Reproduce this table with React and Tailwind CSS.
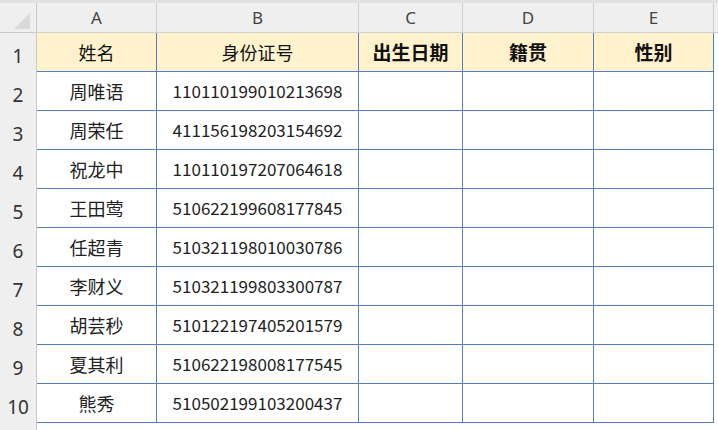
const cols = ['A', 'B', 'C', 'D', 'E'];
const widths = ['w-[120px]', 'w-[202px]', 'w-[104px]', 'w-[131px]', 'w-[120px]'];
const heads = ['姓名', '身份证号', '出生日期', '籍贯', '性别'];

const rows = [
  ['周唯语', '110110199010213698'],
  ['周荣任', '411156198203154692'],
  ['祝龙中', '110110197207064618'],
  ['王田莺', '510622199608177845'],
  ['任超青', '510321198010030786'],
  ['李财义', '510321199803300787'],
  ['胡芸秒', '510122197405201579'],
  ['夏其利', '510622198008177545'],
  ['熊秀', '510502199103200437'],
];

const font = { fontFamily: '"Noto Sans CJK SC", "Noto Sans", sans-serif' };

function RowHead({ n }) {
  return (
    <div className="flex h-[39px] w-[37px] shrink-0 items-end justify-center border-r border-[#c8c8c8] bg-[#efefef] pb-[2px] text-[19px] text-[#333]" style={{ fontFamily: '"Noto Sans", sans-serif' }}>
      {n}
    </div>
  );
}

export default function App() {
  return (
    <div className="h-[430px] w-[718px] overflow-hidden bg-white" style={font}>
      {/* column letters */}
      <div className="flex h-[33px] border-t-[3px] border-[#e2e2e2] bg-[#efefef]">
        <div className="flex w-[37px] shrink-0 items-center justify-center border-r border-b border-[#c8c8c8]">
          <div className="ml-[8px] mt-[6px] h-0 w-0 border-b-[16px] border-l-[16px] border-b-[#d9d9d9] border-l-transparent" />
        </div>
        {cols.map((c, i) => (
          <div
            key={c}
            className={`${widths[i]} flex shrink-0 items-center justify-center border-r border-b border-[#d0d0d0] text-[17px] text-[#444]`}
            style={{ fontFamily: '"Noto Sans", sans-serif' }}
          >
            {c}
          </div>
        ))}
        <div className="flex-1 border-b border-[#c8c8c8]" />
      </div>

      {/* row 1 headers */}
      <div className="flex">
        <RowHead n={1} />
        {heads.map((h, i) => (
          <div
            key={h}
            className={`${widths[i]} flex h-[39px] shrink-0 items-center justify-center border-r border-b border-[#5580bd] bg-[#fff2cc] text-[#111] ${i >= 2 ? 'text-[19px] font-bold' : 'text-[18px]'}`}
          >
            {h}
          </div>
        ))}
      </div>

      {rows.map((r, ri) => (
        <div key={ri} className="flex">
          <RowHead n={ri + 2} />
          {widths.map((w, ci) => (
            <div
              key={ci}
              className={`${w} flex h-[39px] shrink-0 items-center justify-center border-r border-b border-[#5580bd] text-[#222] ${ci === 1 ? 'text-[17px]' : 'text-[18px]'}`}
            >
              {r[ci] || ''}
            </div>
          ))}
        </div>
      ))}

      <div className="flex h-[20px]">
        <div className="w-[37px] shrink-0 border-r border-[#c8c8c8] bg-[#efefef]" />
      </div>
    </div>
  );
}
